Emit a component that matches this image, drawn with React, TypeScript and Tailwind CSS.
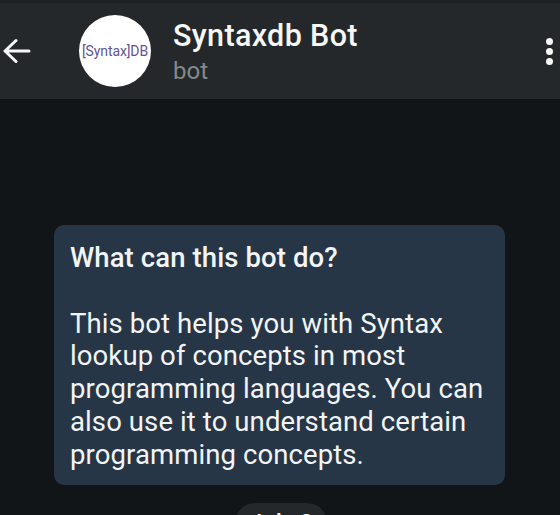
export default function App() {
  return (
    <div className="w-[560px] h-[515px] overflow-hidden flex flex-col bg-[#111518] font-['Roboto',sans-serif]">
      <header className="h-[99px] shrink-0 flex items-center bg-[#24282a] border-t-[3px] border-[#1d2123]">
        <svg className="ml-[3px] w-[28px] h-[26px] -mt-[1px] shrink-0" viewBox="0 0 28 26" fill="none" stroke="#f5f6f6" strokeWidth="3" strokeLinecap="round" strokeLinejoin="round">
          <path d="M2 13h24M13 2.500 2 13l11 10.500" />
        </svg>
        <div className="ml-[48px] w-[72px] h-[72px] shrink-0 rounded-full bg-white flex items-center justify-center">
          <span className="text-[14px] tracking-[-0.1px] text-[#5f5399] whitespace-nowrap">[Syntax]DB</span>
        </div>
        <div className="ml-[22px] flex-1 flex flex-col pt-[2px]">
          <span className="text-[30.500px] leading-[36px] tracking-[0.35px] font-medium text-[#f6f7f7]">Syntaxdb Bot</span>
          <span className="mt-[1px] text-[24px] leading-[32px] text-[#85898b]">bot</span>
        </div>
        <div className="mr-[7px] flex flex-col gap-[3px]">
          <span className="w-[7px] h-[7px] rounded-full bg-[#f5f6f6]" />
          <span className="w-[7px] h-[7px] rounded-full bg-[#f5f6f6]" />
          <span className="w-[7px] h-[7px] rounded-full bg-[#f5f6f6]" />
        </div>
      </header>
      <main className="flex-1 flex flex-col pl-[54px] pt-[126px]">
        <div className="w-[451px] h-[260px] shrink-0 rounded-[10px] bg-[#263646] px-[16px] pt-[17px] text-[27.500px] leading-[32.700px] tracking-[0.1px] text-[#f2f4f6]">
          <p className="font-medium">What can this bot do?</p>
          <p className="mt-[33px]">This bot helps you with Syntax lookup of concepts in most programming languages. You can also use it to understand certain programming concepts.</p>
        </div>
        <div className="mt-[18px] ml-[181px] w-fit h-[40px] px-[14px] rounded-full bg-[#24282a] text-[24px] leading-[40px] font-medium text-[#f2f4f6]">July 2</div>
      </main>
    </div>
  );
}
